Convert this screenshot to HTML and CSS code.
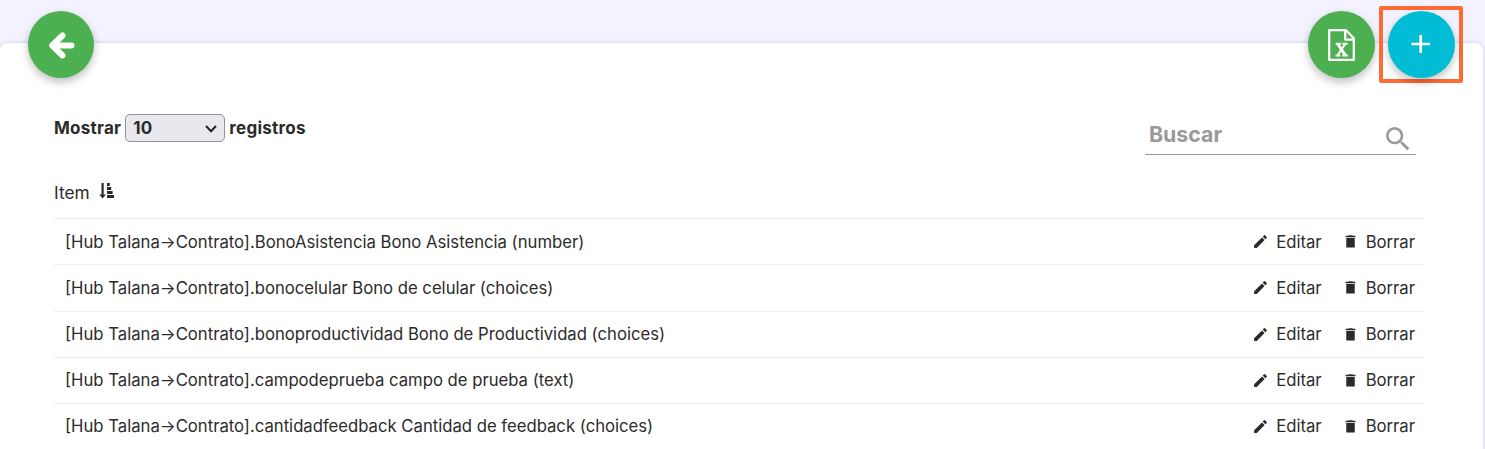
FILE: index.html
```html
<!DOCTYPE html>
<html lang="es">
<head>
  <meta charset="UTF-8">
  <title>Items</title>
  <link rel="stylesheet" href="styles.css">
</head>
<body>
<svg class="sprite" aria-hidden="true">
  <symbol id="icon-edit" viewBox="0 0 24 24">
    <path d="M3 17.25V21h3.75L17.81 9.94l-3.75-3.75L3 17.25zM20.71 7.04a1 1 0 0 0 0-1.41l-2.34-2.34a1 1 0 0 0-1.41 0l-1.83 1.83 3.75 3.75 1.83-1.83z"/>
  </symbol>
  <symbol id="icon-delete" viewBox="0 0 24 24">
    <path d="M6 20.500h12V7H6v13.500zM19 4h-3.500l-1-1h-5l-1 1H5v2h14V4z"/>
  </symbol>
</svg>

<!-- Floating buttons -->
<div class="toolbar">
  <button type="button" class="fab green" aria-label="Volver">
    <svg width="28" height="30" viewBox="0 0 28 30" fill="none" stroke="#fff" stroke-width="6" stroke-linejoin="round">
      <path d="M6 15.500h18.500" stroke-linecap="round"/>
      <path d="M15.500 5.500L5.200 15.500l10.300 10" stroke-linecap="round"/>
    </svg>
  </button>
  <div class="toolbar-right">
    <button type="button" class="fab green" aria-label="Exportar a Excel">
      <svg width="27" height="32" viewBox="0 0 27 32" fill="none" stroke="#fff" stroke-width="2.3" stroke-linejoin="round">
        <path d="M1.200 1.200H18l7.800 8V30.800H1.200z"/>
        <path d="M17.200 1.500V10.600h8.300"/>
        <path d="M9.700 14.800l7.700 11.600" stroke-width="3"/>
        <path d="M17.400 14.800L9.500 26.400" stroke-width="2"/>
        <path d="M7.700 14.700h5.200M14.400 14.700h5.200M7.500 26.500h4.900M14.200 26.500h5.600" stroke-width="2"/>
      </svg>
    </button>
    <div class="highlight">
      <button type="button" class="fab cyan" aria-label="Agregar">
        <svg width="21" height="21" viewBox="0 0 21 21" fill="none" stroke="#fff" stroke-width="2.7">
          <path d="M.5 10h18.500M9.700 1v18"/>
        </svg>
      </button>
    </div>
  </div>
</div>

<div class="card">
  <div class="filters">
    <label class="length">Mostrar
      <span class="select-wrap">
        <select>
          <option>10</option>
          <option>25</option>
          <option>50</option>
        </select>
        <svg width="12" height="8" viewBox="0 0 12 8" fill="none" stroke="#222" stroke-width="2">
          <path d="M1 1l5 5.200L11 1"/>
        </svg>
      </span>
      registros
    </label>
    <div class="search">
      <input type="text" placeholder="Buscar">
      <svg width="32" height="32" viewBox="0 0 24 24" fill="#999">
        <path d="M15.500 14h-.79l-.28-.27A6.470 6.470 0 0 0 16 9.500 6.500 6.500 0 1 0 9.500 16c1.610 0 3.090-.59 4.230-1.570l.27.28v.79l5 4.990L20.490 19l-4.990-5zm-6 0C7.010 14 5 11.990 5 9.500S7.010 5 9.500 5 14 7.010 14 9.500 11.990 14 9.500 14z"/>
      </svg>
    </div>
  </div>

  <div class="table-head">
    <span>Item</span>
    <svg width="16" height="16" viewBox="0 0 16 16" fill="#2b2b2b">
      <path d="M2.500 0h2.200v11.500H7L3.600 15.500.2 11.500h2.300zM8 0h2.800v3H8zM8 4h4.200v3H8zM8 8h5.600v3H8zM8 12h7v3H8z"/>
    </svg>
  </div>

  <div class="row">
    <span class="name">[Hub Talana→Contrato].BonoAsistencia Bono Asistencia (number)</span>
    <a class="action"><svg><use href="#icon-edit"/></svg>Editar</a>
    <a class="action"><svg><use href="#icon-delete"/></svg>Borrar</a>
  </div>
  <div class="row">
    <span class="name">[Hub Talana→Contrato].bonocelular Bono de celular (choices)</span>
    <a class="action"><svg><use href="#icon-edit"/></svg>Editar</a>
    <a class="action"><svg><use href="#icon-delete"/></svg>Borrar</a>
  </div>
  <div class="row">
    <span class="name">[Hub Talana→Contrato].bonoproductividad Bono de Productividad (choices)</span>
    <a class="action"><svg><use href="#icon-edit"/></svg>Editar</a>
    <a class="action"><svg><use href="#icon-delete"/></svg>Borrar</a>
  </div>
  <div class="row">
    <span class="name">[Hub Talana→Contrato].campodeprueba campo de prueba (text)</span>
    <a class="action"><svg><use href="#icon-edit"/></svg>Editar</a>
    <a class="action"><svg><use href="#icon-delete"/></svg>Borrar</a>
  </div>
  <div class="row">
    <span class="name">[Hub Talana→Contrato].cantidadfeedback Cantidad de feedback (choices)</span>
    <a class="action"><svg><use href="#icon-edit"/></svg>Editar</a>
    <a class="action"><svg><use href="#icon-delete"/></svg>Borrar</a>
  </div>
</div>
</body>
</html>
```
FILE: styles.css
```css
* {
  box-sizing: border-box;
}

body {
  margin: 0;
  padding-top: 6px;
  background-color: #f4f2ff;
  font-family: Inter, sans-serif;
  font-size: 17px;
  color: #2b2b2b;
}

.sprite {
  display: none;
}

/* floating buttons */
.toolbar {
  position: relative;
  z-index: 1;
  display: flex;
  justify-content: space-between;
  align-items: center;
  height: 77px;
  padding: 0 22px 0 28px;
}

.toolbar-right {
  display: flex;
  align-items: center;
  gap: 4px;
}

.fab {
  display: flex;
  align-items: center;
  justify-content: center;
  width: 67px;
  height: 67px;
  padding: 0;
  border: none;
  border-radius: 50%;
  box-shadow: 0 4px 9px rgba(0, 0, 0, 0.25);
  cursor: pointer;
}

.toolbar > .fab {
  width: 66px;
}

.green {
  background-color: #4caf50;
}

.cyan {
  background-color: #00bcd4;
}

.highlight {
  display: flex;
  align-items: center;
  justify-content: center;
  width: 84px;
  height: 77px;
  padding-left: 1px;
  border: 4px solid #ff6b35;
  border-radius: 2px;
}

/* card */
.card {
  width: 1483px;
  height: 406px;
  margin-top: -40px;
  padding: 71px 60px 0 54px;
  border-radius: 8px 8px 0 0;
  background-color: #fff;
  box-shadow: 0 0 4px rgba(60, 50, 110, 0.2);
}

.filters {
  display: flex;
  justify-content: space-between;
  height: 65px;
  padding-right: 7px;
}

.length {
  display: flex;
  align-items: center;
  gap: 4px;
  height: 28px;
  font-weight: 700;
  letter-spacing: 0.25px;
}

.select-wrap {
  position: relative;
  display: flex;
}

.select-wrap select {
  width: 100px;
  height: 28px;
  padding: 0 7px;
  appearance: none;
  border: 1px solid #8f8f9d;
  border-radius: 5px;
  background-color: #e9e9ed;
  color: #2b2b2b;
  font: inherit;
  letter-spacing: inherit;
}

.select-wrap svg {
  position: absolute;
  right: 8px;
  top: 11px;
}

.search {
  display: flex;
  align-items: center;
  width: 271px;
  height: 41px;
  border-bottom: 1px solid #999;
}

.search input {
  width: 237px;
  height: 40px;
  padding: 0 4px;
  border: none;
  outline: none;
  background: none;
  font: 700 21.3px Inter, sans-serif;
}

.search input::placeholder {
  color: #999;
}

.search svg {
  flex: none;
  margin-top: 10px;
}

/* table */
.table-head {
  display: flex;
  align-items: center;
  gap: 9px;
  height: 39px;
  padding-bottom: 12px;
  font-size: 17.3px;
}

.table-head svg {
  margin-top: -4px;
}

.row {
  display: flex;
  align-items: center;
  width: 1370px;
  height: 46.25px;
  padding: 0 9px 0 11px;
  border-top: 1px solid #eee;
  font-size: 16.68px;
}

.row:last-child {
  height: 45px;
}

.name {
  flex: 1;
}

.action {
  display: flex;
  align-items: center;
  margin-left: 20px;
  cursor: pointer;
}

.action svg {
  width: 17px;
  height: 17px;
  margin-right: 7px;
  fill: #2b2b2b;
}
```
